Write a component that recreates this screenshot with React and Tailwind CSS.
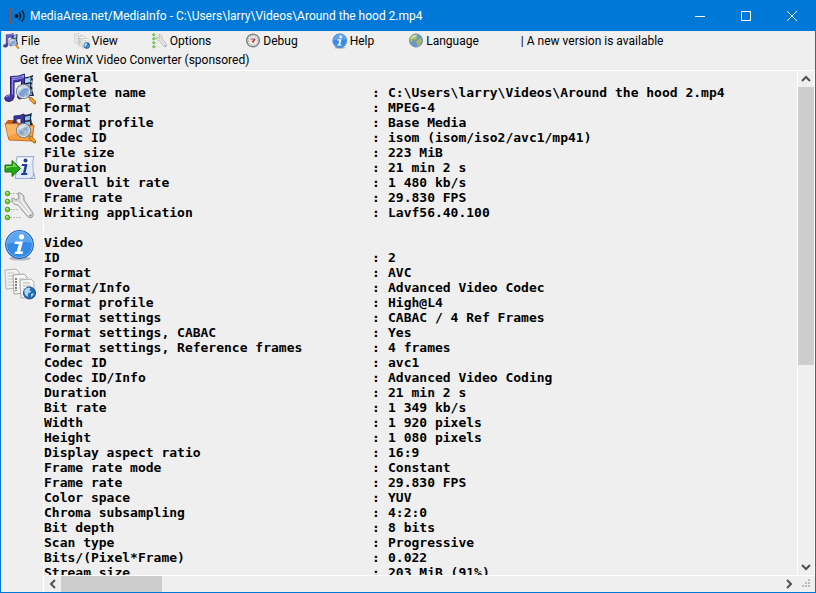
import React from 'react';

function Magnifier() {
  return (
    <g>
      <path d="M24.500 23.500l3 3" stroke="#8f8d8a" strokeWidth="2" />
      <path d="M27 26l3.500 3.500" stroke="#a86712" strokeWidth="3.600" strokeLinecap="round" />
      <path d="M27 26l3 3" stroke="#f2a52b" strokeWidth="2.200" strokeLinecap="round" />
      <circle cx="19.500" cy="18.500" r="6.800" fill="#a5c8ea" fillOpacity=".8" stroke="#77797f" strokeWidth="1.600" />
      <circle cx="19.500" cy="18.500" r="6.200" fill="none" stroke="#e4e8ec" strokeWidth="1" />
      <path d="M19.500 14.500h4v4h-4zM15.500 18.500h4v4h-4z" fill="#5f93d2" fillOpacity=".55" />
      <path d="M14.500 18a5 5 0 0 1 9-3q-5 0-9 3z" fill="#fff" fillOpacity=".6" />
    </g>
  );
}

function FileIcon({ className }) {
  return (
    <svg viewBox="0 0 32 32" fill="none" className={className} aria-hidden="true">
      <path d="M18 4q5 1 11-2v4q-2 8 1 17h-8q-5-8-4-19z" fill="#1b2940" />
      <path d="M20.500 5.500q3 0 6-1.500v5q-3 1-6 1z" fill="#a9d8f4" />
      <path d="M20.500 11.500q3 0 5.500-1v5q-2 1-5 1zM23 18l4-1 1 5h-4z" fill="#75b4e3" />
      <path d="M19 6v2m0 2v2m0 2v2M28.300 4v1.500m-.5 2v2m0 2v2m.2 3v2" stroke="#fff" strokeWidth="1" />
      <path d="M6.500 3.500q8 .5 14-2.500v21q-1 4-5 4-3-1-2-4 1-2 4-2V7.500q-4 1.500-7.500 1.500v15q-.5 4-5 4.500Q1 28.500.7 25.500 1 22 6.500 22z" fill="#4038a8" stroke="#211d68" />
      <path d="M7.500 4.500q7 .5 12-2v2q-6 2-11 2v15M2 24q2-2 4-1" stroke="#938deb" strokeWidth="1.300" />
      <Magnifier />
    </svg>
  );
}

function FolderIcon({ className }) {
  return (
    <svg viewBox="0 0 32 32" fill="none" className={className} aria-hidden="true">
      <path d="M2 10l2-2h8l3 3h14l-1 14-24 1z" fill="#c36519" />
      <path d="M19 3q5 0 9-2l-1 5 2 11h-9z" fill="#182840" />
      <path d="M21 4.500q3 0 5-1v4q-2 1-5 1zM21 10l5-.5V14h-5z" fill="#80c6ed" />
      <path d="M10 4q5 .5 10-2v12h-3V6q-2 1-5 1v8H8v-4l2-1z" fill="#3e389f" stroke="#25206e" />
      <path d="M1 11.500h12l3 2h14L28 29 5 28z" fill="#f4a042" stroke="#c66a1e" />
      <path d="M2 12.500h10.500l3 2H29l-.6 5Q16 17 4 25z" fill="#ffc47b" fillOpacity=".6" />
      <Magnifier />
    </svg>
  );
}

function ExportIcon({ className }) {
  return (
    <svg viewBox="0 0 32 32" fill="none" className={className} aria-hidden="true">
      <path d="M13 5.500h17q-2 6-1 12 0 7 2 10H11q2-6 1-12 0-7 1-10z" fill="#e1e8f8" stroke="#a0afd0" />
      <path d="M26 27.500q4-1 4-5l1 5z" fill="#fff" stroke="#7f91bd" strokeWidth=".7" />
      <path d="M14 7h13q-1 3-1 6-6 2-12 8z" fill="#fff" fillOpacity=".8" />
      <circle cx="21.500" cy="9.500" r="2" fill="#1c3f9d" />
      <path d="M18 13h5.500l-2 9h2l-.5 2h-6l.5-2h1.500l1.500-7h-3z" fill="#1c3f9d" />
      <path d="M1 14h7V9.500l8.500 8-8.500 8V21H1z" fill="#24a817" stroke="#12750e" />
      <path d="M2 15h7v-3.500l4.500 4.500q-6-1-11.500 1.500z" fill="#7bd658" />
    </svg>
  );
}

function OptionsIcon({ className }) {
  return (
    <svg viewBox="0 0 32 32" fill="none" className={className} aria-hidden="true">
      <path d="M6 3.500h9M6 11.500h7M6 19.500h9M6 27.500h12" stroke="#b9b9b9" strokeDasharray="2 1" />
      {[3.5, 11.500, 19.500, 27.500].map((cy) => (
        <g key={cy}>
          <circle cx="3.500" cy={cy} r="2.300" fill="#70cf3a" stroke="#469a25" />
          <circle cx="3" cy={cy - 0.800} r=".8" fill="#d3ffb7" />
        </g>
      ))}
      <path d="M8 10q-1-2 1-2l3 2 3-2-1-4q0-2 2-1 5 2 4 7l9 13q1 4-2 5-2 0-4-2l-9-11q-5 0-6-5z" fill="#d6d6d4" stroke="#999996" />
      <path d="M10 12l4 1 11 12M17 5l1 6 9 13" stroke="#f7f7f7" strokeWidth="1.300" />
      <circle cx="26.500" cy="25.500" r="1.100" fill="#8d8d8b" />
    </svg>
  );
}

function InfoIcon({ className }) {
  return (
    <svg viewBox="0 0 32 32" fill="none" className={className} aria-hidden="true">
      <ellipse cx="16" cy="29.500" rx="11" ry="2" fill="#b5b9bf" />
      <circle cx="15.500" cy="15.500" r="14" fill="#2872d5" stroke="#1d58b4" />
      <circle cx="15.500" cy="15.500" r="13" fill="#348ae7" stroke="#7cb7f3" />
      <path d="M3 15a12.500 12.500 0 0 1 25-1Q15 11 3 15z" fill="#7fb9f4" fillOpacity=".55" />
      <circle cx="17.500" cy="7.800" r="2.600" fill="#fff" />
      <path d="M11 12.500h8l-2.700 10h3l-.8 2.500h-8l.8-2.500h1.500l2-7.500h-4.500z" fill="#fff" />
    </svg>
  );
}

function ViewIcon({ className }) {
  return (
    <svg viewBox="0 0 32 32" fill="none" className={className} aria-hidden="true">
      <path d="M1 2l11-1 3 3v16L2 21z" fill="#f1f1ef" stroke="#b2b2b2" />
      <path d="M3.500 5h7M3.500 8h8M3.500 11h8M3.500 14h7M3.500 17h7" stroke="#c4c4c4" />
      <path d="M9 7l11-1 3 3v16l-13 1z" fill="#f7f7f5" stroke="#a2a2a2" />
      <path d="M12 10v13" stroke="#808080" strokeWidth="2" strokeDasharray="2 1" />
      <path d="M15 11h5M15 14h5M15 17h5M15 20h5" stroke="#b2b2b2" />
      <path d="M16 12l11-1 3 3v15l-13 1z" fill="#f5f5f3" stroke="#b2b2b2" />
      <path d="M19 15h7M19 18h8M19 21h7" stroke="#b2b2b2" />
      <circle cx="25.500" cy="25" r="6" fill="#246bb5" stroke="#17508f" />
      <path d="M20.500 22q2-3 6-2l-1 2 2 2-3 1-1 4q-4-3-3-7zM27 26l3-1q-1 3-3 4z" fill="#a9d8f7" />
    </svg>
  );
}

function DebugIcon({ className }) {
  return (
    <svg viewBox="0 0 16 16" fill="none" className={className} aria-hidden="true">
      <circle cx="8" cy="7.500" r="6.300" fill="#eee" stroke="#868686" strokeWidth="1.600" />
      <circle cx="8" cy="7.500" r="4.500" stroke="#8c8c8c" strokeDasharray="1 1.500" />
      <path d="M5.500 6l4.500 0-2 4" stroke="#666" />
      <path d="M7 9l3-3" stroke="#d63838" strokeWidth="1.500" />
    </svg>
  );
}

function LanguageIcon({ className }) {
  return (
    <svg viewBox="0 0 16 16" fill="none" className={className} aria-hidden="true">
      <circle cx="8" cy="7.500" r="6.500" fill="#6698c8" stroke="#6c88a8" />
      <path d="M2 5l3-3 4-.5-1 2 2 1-2 2-3 0-1 3-2-1zM10 7l3-2 1 3-3 5-2 0 0-3-2-1z" fill="#a9b95d" />
      <path d="M3 4q3-3 7-2Q7 5 3 6z" fill="#fff" fillOpacity=".45" />
    </svg>
  );
}

const menus = [
  ['File', FileIcon],
  ['View', ViewIcon],
  ['Options', OptionsIcon],
  ['Debug', DebugIcon],
  ['Help', InfoIcon],
  ['Language', LanguageIcon],
];

const tools = [
  ['Open file', FileIcon],
  ['Open folder', FolderIcon],
  ['Export', ExportIcon],
  ['Options', OptionsIcon],
  ['About', InfoIcon],
  ['View', ViewIcon],
];

const sections = [
  {
    title: 'General',
    rows: [
      ['Complete name', 'C:\\Users\\larry\\Videos\\Around the hood 2.mp4'],
      ['Format', 'MPEG-4'],
      ['Format profile', 'Base Media'],
      ['Codec ID', 'isom (isom/iso2/avc1/mp41)'],
      ['File size', '223 MiB'],
      ['Duration', '21 min 2 s'],
      ['Overall bit rate', '1 480 kb/s'],
      ['Frame rate', '29.830 FPS'],
      ['Writing application', 'Lavf56.40.100'],
    ],
  },
  {
    title: 'Video',
    rows: [
      ['ID', '2'],
      ['Format', 'AVC'],
      ['Format/Info', 'Advanced Video Codec'],
      ['Format profile', 'High@L4'],
      ['Format settings', 'CABAC / 4 Ref Frames'],
      ['Format settings, CABAC', 'Yes'],
      ['Format settings, Reference frames', '4 frames'],
      ['Codec ID', 'avc1'],
      ['Codec ID/Info', 'Advanced Video Coding'],
      ['Duration', '21 min 2 s'],
      ['Bit rate', '1 349 kb/s'],
      ['Width', '1 920 pixels'],
      ['Height', '1 080 pixels'],
      ['Display aspect ratio', '16:9'],
      ['Frame rate mode', 'Constant'],
      ['Frame rate', '29.830 FPS'],
      ['Color space', 'YUV'],
      ['Chroma subsampling', '4:2:0'],
      ['Bit depth', '8 bits'],
      ['Scan type', 'Progressive'],
      ['Bits/(Pixel*Frame)', '0.022'],
      ['Stream size', '203 MiB (91%)'],
    ],
  },
];

function Section({ title, rows }) {
  return (
    <table className="mb-[15px] w-full table-fixed border-collapse text-left">
      <caption className="text-left">{title}</caption>
      <colgroup>
        <col className="w-[328px]" />
        <col className="w-4" />
        <col />
      </colgroup>
      <tbody>
        {rows.map(([name, value]) => (
          <tr key={name}>
            <th scope="row" className="p-0">{name}</th>
            <td className="p-0">:</td>
            <td className="p-0">{value}</td>
          </tr>
        ))}
      </tbody>
    </table>
  );
}

function ScrollButton({ label, d, className }) {
  return (
    <button type="button" aria-label={label} className={`flex shrink-0 items-center justify-center ${className}`}>
      <svg viewBox="0 0 10 10" className="size-[10px]" fill="none" stroke="#505050" strokeWidth="2" aria-hidden="true">
        <path d={d} />
      </svg>
    </button>
  );
}

export default function App() {
  return (
    <div className="flex h-screen flex-col overflow-hidden border border-t-0 border-[#0078d7] bg-[#efefef] font-[Roboto,'Open_Sans',sans-serif] text-[12px] leading-4 text-black">
      <header className="flex h-[31px] shrink-0 items-center bg-[#0078d7] text-white">
        <svg viewBox="0 0 16 16" className="ml-2 size-4 shrink-0" fill="none" aria-hidden="true">
          <path d="M1.500 0v16" stroke="#a04a3c" />
          <path d="M2.500 0v16" stroke="#248a37" />
          <circle cx="7.500" cy="8" r="2" fill="#061522" />
          <path d="M10 4q3 4 0 8M13 2.500q4 5.500 0 11" stroke="#061522" strokeWidth="1.400" />
        </svg>
        <h1 className="ml-[5px] grow truncate">MediaArea.net/MediaInfo - C:\Users\larry\Videos\Around the hood 2.mp4</h1>
        <div className="flex h-full shrink-0">
          <button type="button" aria-label="Minimize" className="flex w-[46px] items-center justify-center">
            <svg viewBox="0 0 10 10" className="size-[10px]" fill="none" stroke="white" aria-hidden="true"><path d="M0 5.500h10" /></svg>
          </button>
          <button type="button" aria-label="Maximize" className="flex w-[46px] items-center justify-center">
            <svg viewBox="0 0 10 10" className="size-[10px]" fill="none" stroke="white" aria-hidden="true"><path d="M.5.5h9v9h-9z" /></svg>
          </button>
          <button type="button" aria-label="Close" className="flex w-[46px] items-center justify-center">
            <svg viewBox="0 0 10 10" className="size-[10px]" fill="none" stroke="white" aria-hidden="true"><path d="M0 0l10 10M10 0L0 10" /></svg>
          </button>
        </div>
      </header>

      <nav className="shrink-0 whitespace-nowrap">
        <div className="flex h-[19px] items-center gap-[34px] pl-0.5">
          {menus.map(([label, Icon]) => (
            <button key={label} type="button" className="flex items-center gap-0.5">
              <Icon className="size-4" />
              {label}
            </button>
          ))}
          <a href="#update" className="ml-2">| A new version is available</a>
        </div>
        <a href="#sponsor" className="flex h-5 items-center pl-[19px]">Get free WinX Video Converter (sponsored)</a>
      </nav>

      <div className="flex min-h-0 grow">
        <aside className="flex w-[42px] shrink-0 flex-col gap-[7px] pl-[3px] pt-[3px]">
          {tools.map(([label, Icon]) => (
            <button key={label} type="button" aria-label={label}>
              <Icon className="size-8" />
            </button>
          ))}
        </aside>

        <div className="flex min-w-0 grow flex-col border-l border-white">
          <div className="flex min-h-0 grow border-b border-white">
            <main className="min-w-0 grow overflow-hidden whitespace-pre shadow-[inset_0_1px_white] font-['DejaVu_Sans_Mono',monospace] text-[13px] font-bold leading-[15px]">
              {sections.map((section) => (
                <Section key={section.title} {...section} />
              ))}
            </main>
            <div className="flex w-[18px] shrink-0 flex-col border-x border-t border-white">
              <ScrollButton label="Scroll up" d="M1 7l4-4 4 4" className="h-4" />
              <div className="flex grow flex-col">
                <div className="h-[59%] bg-[#cdcdcd]" />
              </div>
              <ScrollButton label="Scroll down" d="M1 3l4 4 4-4" className="h-4" />
            </div>
          </div>
          <div className="flex h-4 shrink-0">
            <ScrollButton label="Scroll left" d="M7 1L3 5l4 4" className="w-[17px]" />
            <div className="flex grow">
              <div className="w-[14%] bg-[#cdcdcd]" />
            </div>
            <ScrollButton label="Scroll right" d="M3 1l4 4-4 4" className="w-[17px]" />
            <div className="flex w-[18px] items-end justify-end p-1">
              <svg viewBox="0 0 9 9" className="size-[9px]" fill="#bcbcbc" aria-hidden="true">
                <path d="M6 0h2v2H6zM6 3h2v2H6zM6 6h2v2H6zM3 3h2v2H3zM3 6h2v2H3zM0 6h2v2H0z" />
              </svg>
            </div>
          </div>
        </div>
      </div>
    </div>
  );
}
